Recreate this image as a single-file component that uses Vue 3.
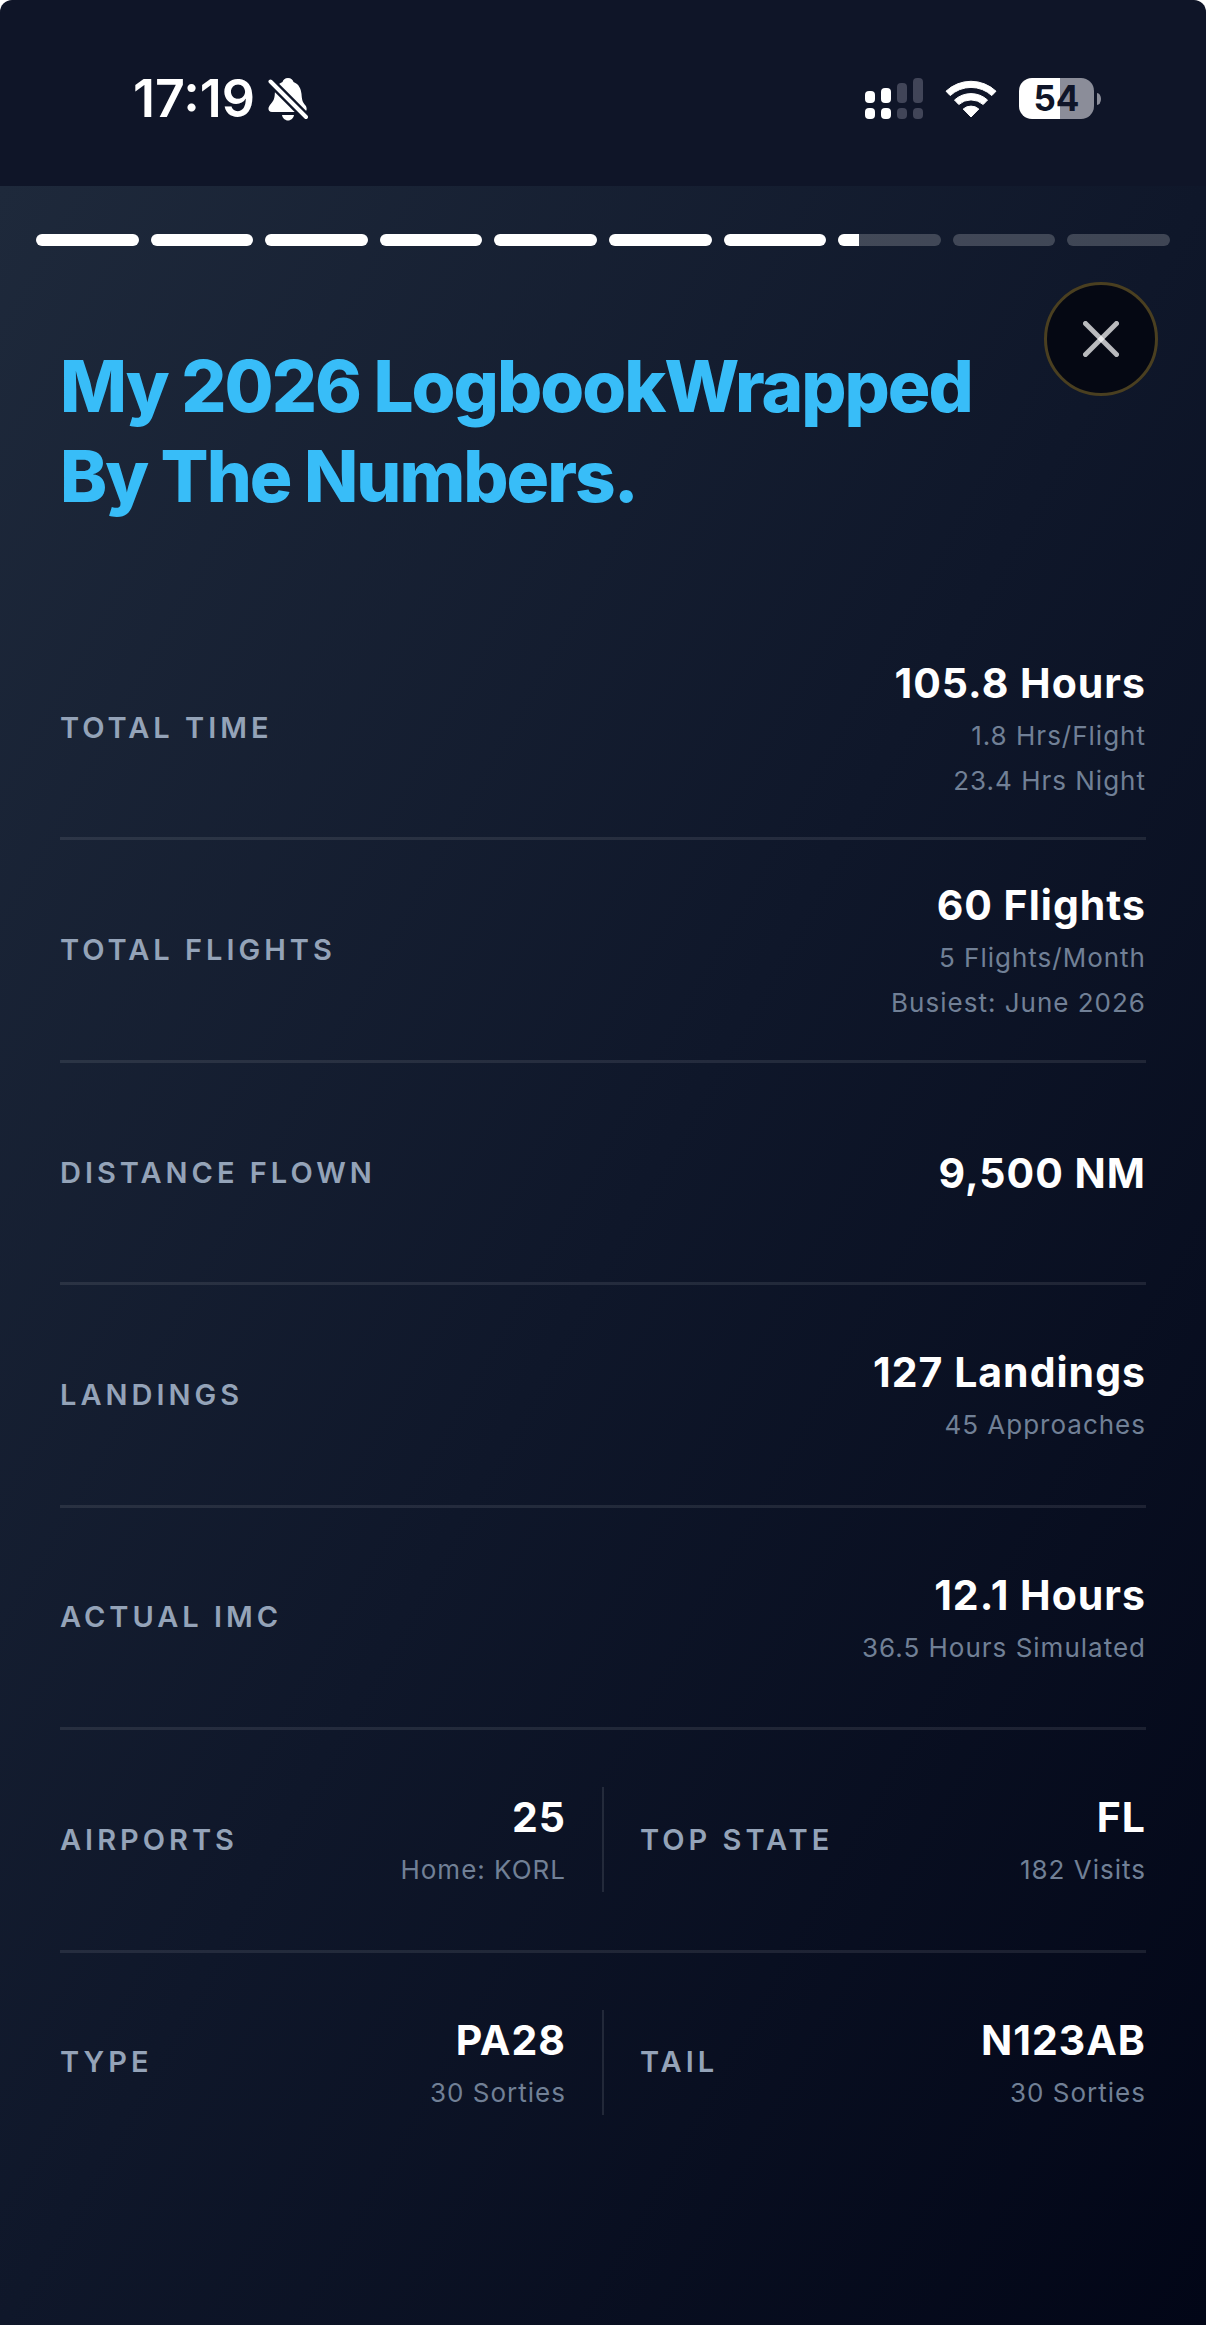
<script setup>
const segments = [100, 100, 100, 100, 100, 100, 100, 20, 0, 0]

const rows = [
  [{ label: 'Total Time', value: '105.8 Hours', notes: ['1.8 Hrs/Flight', '23.4 Hrs Night'] }],
  [{ label: 'Total Flights', value: '60 Flights', notes: ['5 Flights/Month', 'Busiest: June 2026'] }],
  [{ label: 'Distance Flown', value: '9,500 NM', notes: [] }],
  [{ label: 'Landings', value: '127 Landings', notes: ['45 Approaches'] }],
  [{ label: 'Actual IMC', value: '12.1 Hours', notes: ['36.5 Hours Simulated'] }],
  [
    { label: 'Airports', value: '25', notes: ['Home: KORL'] },
    { label: 'Top State', value: 'FL', notes: ['182 Visits'] },
  ],
  [
    { label: 'Type', value: 'PA28', notes: ['30 Sorties'] },
    { label: 'Tail', value: 'N123AB', notes: ['30 Sorties'] },
  ],
]
</script>

<template>
  <div class="screen">
    <header class="status">
      <div class="clock">
        <time>17:19</time>
        <svg class="bell" width="40" height="44" viewBox="0 0 40 44" aria-label="Silent mode">
          <defs>
            <mask id="bell-cut">
              <rect width="40" height="44" fill="#fff" />
              <path d="M0 2 L40 42" stroke="#000" stroke-width="9" />
            </mask>
          </defs>
          <g fill="#fff" mask="url(#bell-cut)">
            <path d="M20 1c3 0 5 2 5.500 4C31 7 33 12 33.500 17c.4 6 1 8 4 11.500 1.500 2 2 6-1.500 6.500H4c-4 0-4.500-4-2-7 3.500-4 4.500-6 4.800-11C7 12 9 7 14.500 5c.5-2 2.500-4 5.500-4z" />
          </g>
          <path d="M14 38h12c-.5 3-3 5.500-6 5.500S14.500 41 14 38z" fill="#fff" />
          <path d="M2.500 4.500 L38 40" stroke="#fff" stroke-width="4" stroke-linecap="round" />
        </svg>
      </div>
      <div class="indicators">
        <svg width="58" height="42" viewBox="0 0 58 42" aria-label="Signal">
          <g fill="#fff">
            <rect x="0" y="13" width="10" height="12" rx="4" />
            <rect x="16" y="10" width="10" height="15" rx="4" />
            <rect x="0" y="30" width="10" height="11" rx="4" />
            <rect x="16" y="30" width="10" height="11" rx="4" />
          </g>
          <g fill="#414558">
            <rect x="32" y="5" width="10" height="20" rx="4" />
            <rect x="48" y="0" width="10" height="25" rx="4" />
            <rect x="32" y="30" width="10" height="11" rx="4" />
            <rect x="48" y="30" width="10" height="11" rx="4" />
          </g>
        </svg>
        <svg class="wifi" width="52" height="40" viewBox="0 0 52 40" aria-label="Wi-Fi">
          <g fill="#fff" stroke="#fff" stroke-width="1" stroke-linejoin="round">
            <path d="M1 12.200A36.500 36.500 0 0 1 51 12.200L46.800 16.600A30.500 30.500 0 0 0 5.200 16.600Z" />
            <path d="M9.500 21A24.500 24.500 0 0 1 42.500 21L38.200 25.500A18.500 18.500 0 0 0 13.800 25.500Z" />
            <path d="M18.200 30A12 12 0 0 1 33.800 30L26 38Z" />
          </g>
        </svg>
        <div class="battery"><span class="cell">54</span><span class="nub"></span></div>
      </div>
    </header>

    <main class="story">
      <div class="progress" aria-label="Story progress">
        <div v-for="(fill, i) in segments" :key="i" class="segment">
          <div class="fill" :style="{ width: fill + '%' }"></div>
        </div>
      </div>

      <button class="close" type="button" aria-label="Close">
        <svg width="36" height="36" viewBox="0 0 36 36" aria-hidden="true">
          <g stroke="#fff" stroke-opacity=".72" stroke-width="5" stroke-linecap="round">
            <path d="M2.500 2.500 L33.500 33.500" />
            <path d="M33.500 2.500 L2.500 33.500" />
          </g>
        </svg>
      </button>

      <h1>My 2026 LogbookWrapped<br />By The Numbers.</h1>

      <div class="rows">
        <dl v-for="(row, r) in rows" :key="r" class="row">
          <div v-for="stat in row" :key="stat.label" class="stat">
            <dt>{{ stat.label }}</dt>
            <dd>
              <strong>{{ stat.value }}</strong>
              <small v-for="note in stat.notes" :key="note">{{ note }}</small>
            </dd>
          </div>
        </dl>
      </div>
    </main>
  </div>
</template>

<style>
body {
  background: #fff;
}
</style>

<style scoped>
.screen {
  display: flex;
  flex-direction: column;
  min-height: 100vh;
  box-sizing: border-box;
  border-radius: 12px 12px 0 0;
  overflow: hidden;
  background: #0f1528;
  color: #fff;
  font-family: Inter, "Liberation Sans", sans-serif;
}

.status {
  display: flex;
  justify-content: space-between;
  align-items: center;
  height: 186px;
  box-sizing: border-box;
  padding: 11px 105px 0 133px;
}

.clock,
.indicators,
.battery {
  display: flex;
  align-items: center;
}

.clock {
  gap: 13px;
}

.clock time {
  font-size: 52px;
  line-height: 60px;
  font-weight: 600;
}

.indicators {
  gap: 22px;
}

.battery {
  gap: 3px;
}

.cell {
  width: 75px;
  height: 41px;
  border-radius: 13px;
  background: linear-gradient(to right, #fff 55%, #8b8d99 55%);
  color: #0f1528;
  font-size: 35px;
  line-height: 41px;
  font-weight: 700;
  text-align: center;
}

.nub {
  width: 4px;
  height: 12px;
  border-radius: 0 4px 4px 0 / 0 6px 6px 0;
  background: #8b8d99;
}

.story {
  position: relative;
  display: flex;
  flex: 1;
  flex-direction: column;
  padding: 48px 60px 150px;
  background: linear-gradient(to bottom right, #1e293b, #0f172a, #020617);
}

.progress {
  display: flex;
  gap: 12px;
  margin: 0 -24px;
}

.segment {
  flex: 1;
  height: 12px;
  border-radius: 6px;
  overflow: hidden;
  background: rgba(255, 255, 255, 0.2);
}

.fill {
  height: 100%;
  background: #fff;
}

.close {
  position: absolute;
  top: 96px;
  right: 48px;
  display: flex;
  align-items: center;
  justify-content: center;
  width: 114px;
  height: 114px;
  padding: 0;
  border: 3px solid #4a3f20;
  border-radius: 50%;
  background: #050813;
}

h1 {
  margin: 95px 0 0;
  color: #38bdf8;
  font-size: 71px;
  line-height: 90px;
  font-weight: 800;
  letter-spacing: -2px;
}

.rows {
  display: grid;
  flex: 1;
  grid-auto-rows: 1fr;
  margin-top: 97px;
}

.row {
  display: flex;
  align-items: center;
  margin: 0;
  border-bottom: 3px solid rgba(255, 255, 255, 0.09);
}

.row:last-child {
  border-bottom-color: transparent;
}

.stat {
  display: flex;
  flex: 1;
  align-items: center;
  justify-content: space-between;
}

.stat + .stat {
  min-height: 105px;
  margin-left: 36px;
  padding-left: 36px;
  border-left: 2px solid rgba(255, 255, 255, 0.1);
}

dt {
  color: #94a3b8;
  font-size: 29px;
  line-height: 36px;
  font-weight: 600;
  letter-spacing: 4px;
  text-transform: uppercase;
}

dd {
  display: flex;
  flex-direction: column;
  gap: 9px;
  margin: 0;
  text-align: right;
}

strong {
  font-size: 41px;
  line-height: 52px;
  font-weight: 700;
  letter-spacing: 1px;
}

small {
  color: #718096;
  font-size: 26px;
  line-height: 36px;
  letter-spacing: 1px;
}
</style>
